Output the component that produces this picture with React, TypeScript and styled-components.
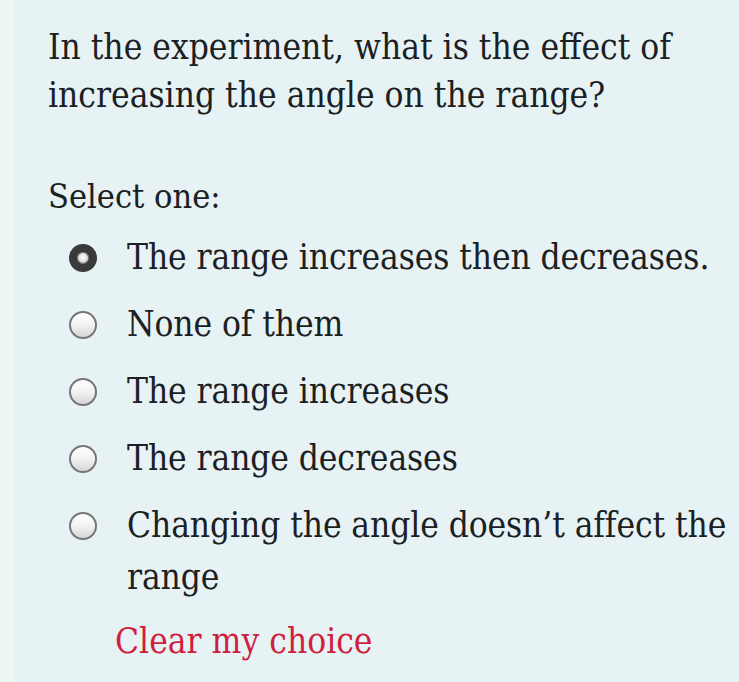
import React, { useState } from 'react'
import styled, { createGlobalStyle } from 'styled-components'

const GlobalStyle = createGlobalStyle`
  html, body {
    margin: 0;
    padding: 0;
    background: #e6f2f4;
  }
`

const Panel = styled.div`
  box-sizing: border-box;
  width: 739px;
  height: 682px;
  background: #e6f2f4;
  border-left: 14px solid #eef6f3;
  padding: 23px 0 0 34px;
  font-family: 'DejaVu Serif', serif;
  font-stretch: condensed;
  color: #1b2023;
  overflow: hidden;
`

const Question = styled.div`
  font-size: 35px;
  line-height: 48px;
  margin: 0;
  padding-right: 14px;
`

const Prompt = styled.div`
  font-size: 34px;
  line-height: 40px;
  margin-top: 57px;
`

const Options = styled.div`
  display: flex;
  flex-direction: column;
  gap: 15px;
  margin-top: 15px;
  padding-left: 21px;
`

const Option = styled.label`
  display: flex;
  align-items: flex-start;
  gap: 30px;
  font-size: 35px;
  line-height: 52px;
  cursor: pointer;
`

const Radio = styled.span<{ checked: boolean }>`
  flex: none;
  box-sizing: border-box;
  width: 28px;
  height: 28px;
  margin-top: 13px;
  border-radius: 50%;
  border: ${({ checked }) => (checked ? '8px solid #3a3a3a' : '2px solid #767676')};
  background: ${({ checked }) =>
    checked
      ? 'radial-gradient(circle at 50% 45%, #ffffff 0, #d8d8d8 60%, #9a9a9a 100%)'
      : 'linear-gradient(180deg, #ffffff 0%, #f2f2f2 50%, #d6d6d6 100%)'};
  box-shadow: ${({ checked }) => (checked ? 'inset 0 0 0 1px #6a6a6a' : 'inset 0 1px 1px rgba(255,255,255,0.9)')};
`

const OptionText = styled.span`
  flex: 1;
  letter-spacing: -0.1px;
`

const ClearLink = styled.a`
  display: block;
  margin-top: 12px;
  padding-left: 67px;
  font-size: 35px;
  line-height: 52px;
  color: #cf1f3e;
  text-decoration: none;
`

const CHOICES = [
  'The range increases then decreases.',
  'None of them',
  'The range increases',
  'The range decreases',
  'Changing the angle doesn\u2019t affect the range',
]

export default function App() {
  const [selected, setSelected] = useState<number | null>(0)

  return (
    <>
      <GlobalStyle />
      <Panel>
        <Question>
          In the experiment, what is the effect of increasing the angle on the range?
        </Question>
        <Prompt>Select one:</Prompt>
        <Options>
          {CHOICES.map((c, i) => (
            <Option key={c} onClick={() => setSelected(i)}>
              <Radio checked={selected === i} />
              <OptionText>{c}</OptionText>
            </Option>
          ))}
        </Options>
        <ClearLink href="#" onClick={(e) => { e.preventDefault(); setSelected(null) }}>
          Clear my choice
        </ClearLink>
      </Panel>
    </>
  )
}
